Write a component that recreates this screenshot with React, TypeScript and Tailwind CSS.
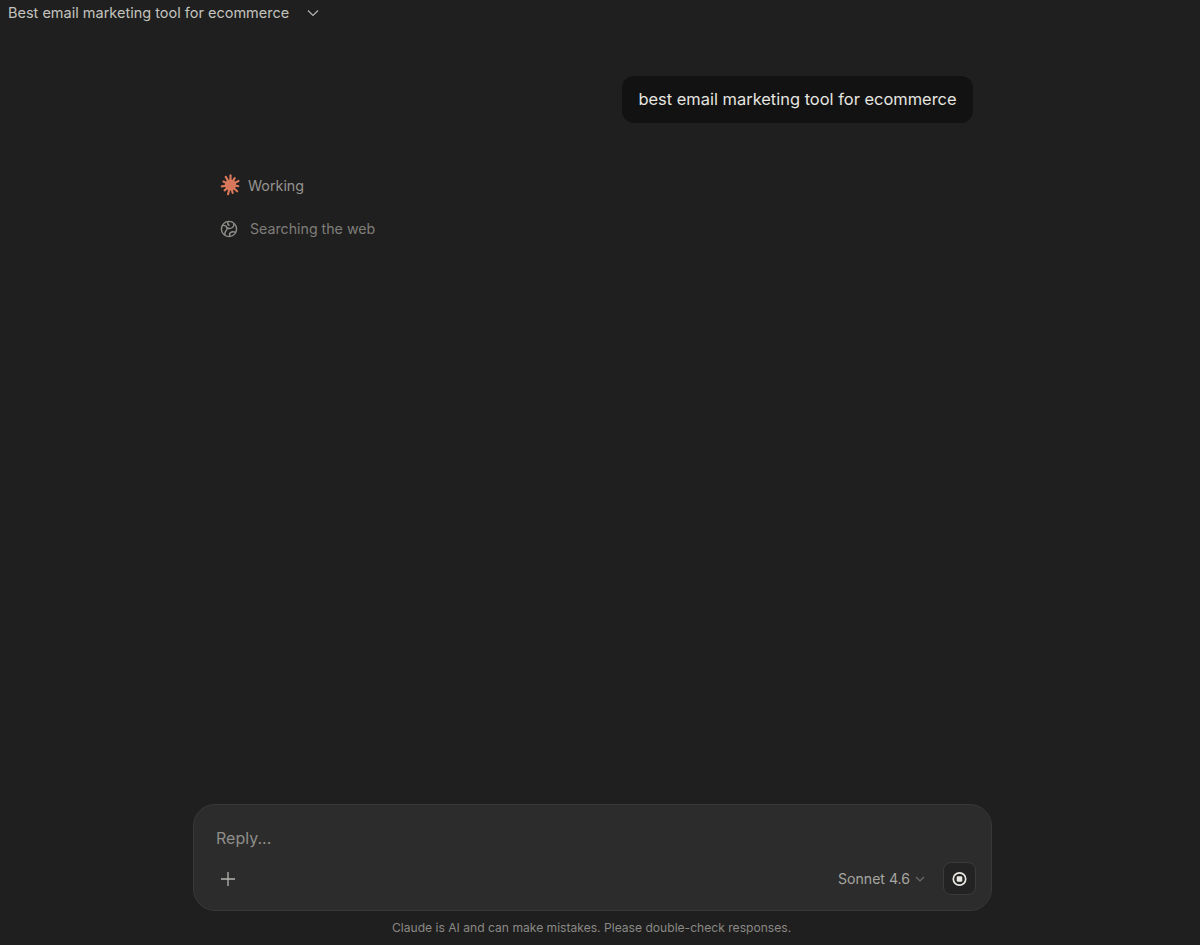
import React from "react";

const rays = Array.from({ length: 11 }, (_, i) => (i * 360) / 11);

function Spark() {
  return (
    <svg width="20" height="22" viewBox="0 0 20 22" className="shrink-0">
      <circle cx="10.5" cy="11" r="5.6" fill="#e08163" />
      {rays.map((a, i) => (
        <line
          key={a}
          x1="10.5"
          y1="11"
          x2={10.5 + (i % 2 ? 7.8 : 8.8) * Math.sin((a * Math.PI) / 180)}
          y2={11 - (i % 2 ? 8.2 : 9.6) * Math.cos((a * Math.PI) / 180)}
          stroke="#d9775b"
          strokeWidth="2.2"
          strokeLinecap="round"
        />
      ))}
    </svg>
  );
}

function Globe() {
  return (
    <svg width="18" height="18" viewBox="0 0 18 18" fill="none" stroke="#8f8e8a" strokeWidth="1.4" className="shrink-0">
      <circle cx="9" cy="9" r="7.6" />
      <path d="M2.5 5.5C5 5 6.5 6 7 8c.4 1.6-.6 2.5-1.5 3.5-.8 1-.8 2.4-.4 4" />
      <path d="M7 8c2 .8 4 .6 5.5-.5 1-.8 1.6-2.6 1.2-4" />
      <path d="M8 2c-.6 1.5.2 3 1.5 3.6" />
      <path d="M10 16.4c-.8-1.6-.4-3.2.8-4 1.3-.9 3-.8 5-.1" />
    </svg>
  );
}

export default function App() {
  return (
    <div className="h-[945px] w-[1200px] overflow-hidden bg-[#1f1f1f] flex flex-col font-['Inter',sans-serif]">
      <header className="h-[26px] shrink-0 pl-2 flex items-center gap-[18px] text-[#c4c3be] text-[14.5px]">
        <span>Best email marketing tool for ecommerce</span>
        <svg width="12" height="8" viewBox="0 0 12 8" fill="none" stroke="#b5b4af" strokeWidth="1.2">
          <path d="M1 1.5l5 5 5-5" />
        </svg>
      </header>

      <main className="flex-1 min-h-0 flex flex-col">
        <div className="mt-[50px] ml-[622px] w-[351px] h-[47px] rounded-xl bg-[#121212] flex items-center justify-center text-[#e6e5e0] text-[16.45px]">
          best email marketing tool for ecommerce
        </div>
        <div className="mt-[50px] ml-[220px] flex items-center gap-2 h-[24px] text-[#94938e] text-[14.3px]">
          <Spark />
          <span className="translate-y-px">Working</span>
        </div>
        <div className="mt-[20px] ml-[220px] flex items-center gap-[12px] h-[24px] text-[#7f7e7a] text-[14.2px]">
          <Globe />
          <span>Searching the web</span>
        </div>
      </main>

      <div className="ml-[193px] w-[799px] h-[107px] shrink-0 rounded-[22px] bg-[#2c2c2c] border border-[#383838] pl-[22px] pr-[15px] flex flex-col">
        <div className="pt-[22px] text-[#8f8e8a] text-[16px] leading-[22px]">Reply...</div>
        <div className="mt-auto mb-[15px] flex items-center justify-between">
          <svg width="16" height="16" viewBox="0 0 16 16" fill="none" stroke="#b5b4af" strokeWidth="1.3" className="ml-[4px]">
            <path d="M8 1v14M1 8h14" />
          </svg>
          <div className="flex items-center">
            <span className="text-[#a6a5a0] text-[14.1px]">Sonnet 4.6</span>
            <svg width="10" height="6" viewBox="0 0 10 6" fill="none" stroke="#6f6e6a" strokeWidth="1.1" className="ml-[5px]">
              <path d="M1 1l4 4 4-4" />
            </svg>
            <div className="ml-[18px] w-[33px] h-[33px] rounded-lg bg-[#232323] border border-[#3b3b3b] flex items-center justify-center">
              <svg width="16" height="16" viewBox="0 0 16 16" className="-translate-x-[0.5px]">
                <circle cx="8" cy="8" r="6.2" fill="none" stroke="#e8e7e2" strokeWidth="1.7" />
                <rect x="5.2" y="5.2" width="5.6" height="5.6" rx="1.2" fill="#e8e7e2" />
              </svg>
            </div>
          </div>
        </div>
      </div>

      <footer className="h-[34px] shrink-0 pl-[392px] pt-[9px] text-[#8a8985] text-[12.1px] leading-[16px]">
        Claude is AI and can make mistakes. Please double-check responses.
      </footer>
    </div>
  );
}
